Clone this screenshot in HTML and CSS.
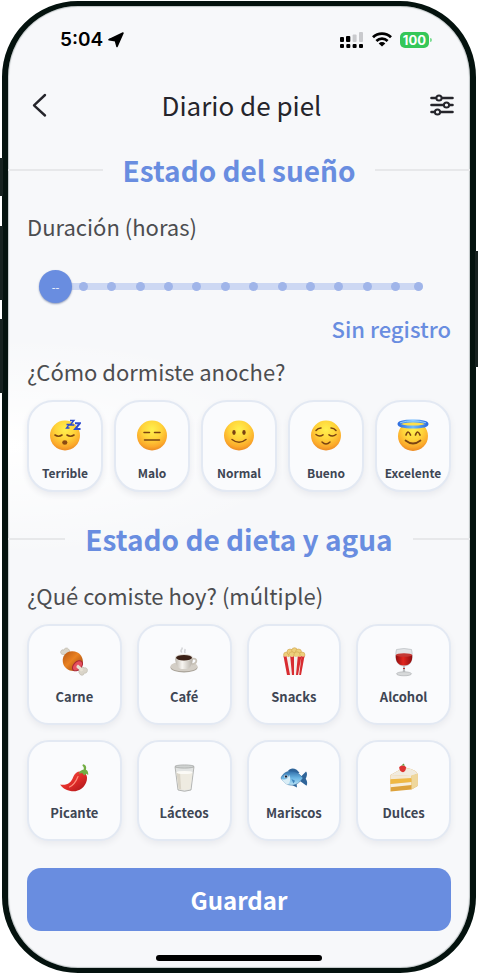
FILE: index.html
```html
<!DOCTYPE html>
<html lang="es">
<head>
<meta charset="utf-8">
<meta name="viewport" content="width=device-width, initial-scale=1">
<title>Diario de piel</title>
<link rel="stylesheet" href="styles.css">
</head>
<body>
<svg class="defs" width="0" height="0" aria-hidden="true">
  <defs>
    <radialGradient id="face" cx="50%" cy="30%" r="72%">
      <stop offset="0" stop-color="#fff04e"/>
      <stop offset="0.45" stop-color="#ffd43a"/>
      <stop offset="0.8" stop-color="#fba92b"/>
      <stop offset="1" stop-color="#ea8521"/>
    </radialGradient>
    <linearGradient id="halo" x1="0" y1="0" x2="1" y2="0">
      <stop offset="0" stop-color="#2f6fe0"/>
      <stop offset="0.5" stop-color="#6ebcff"/>
      <stop offset="1" stop-color="#2f6fe0"/>
    </linearGradient>
    <linearGradient id="meat" x1="0" y1="0" x2="1" y2="1">
      <stop offset="0" stop-color="#b65412"/>
      <stop offset="0.45" stop-color="#ea8221"/>
      <stop offset="1" stop-color="#8c3a0e"/>
    </linearGradient>
    <linearGradient id="cup" x1="0" y1="0" x2="1" y2="0">
      <stop offset="0" stop-color="#bcb6ad"/>
      <stop offset="0.4" stop-color="#f7f5f1"/>
      <stop offset="1" stop-color="#b3ada4"/>
    </linearGradient>
    <linearGradient id="wine" x1="0" y1="0" x2="1" y2="0">
      <stop offset="0" stop-color="#8e0d10"/>
      <stop offset="0.45" stop-color="#e2271f"/>
      <stop offset="1" stop-color="#8e0d10"/>
    </linearGradient>
    <linearGradient id="chili" x1="0" y1="0" x2="1" y2="1">
      <stop offset="0" stop-color="#f8564a"/>
      <stop offset="0.55" stop-color="#de2a27"/>
      <stop offset="1" stop-color="#a4141a"/>
    </linearGradient>
    <linearGradient id="fish" x1="0" y1="0" x2="0" y2="1">
      <stop offset="0" stop-color="#2f6da8"/>
      <stop offset="0.5" stop-color="#6cb6e4"/>
      <stop offset="1" stop-color="#b9e2f5"/>
    </linearGradient>
  </defs>
</svg>

<div class="phone">
  <span class="key key-action"></span>
  <span class="key key-up"></span>
  <span class="key key-down"></span>
  <span class="key key-power"></span>

  <main class="screen">
    <div class="status">
      <div class="status-time">
        <span>5:04</span>
        <svg width="16" height="16" viewBox="0 0 16 16"><path d="M15 1 9 14.500 7.400 8.600 1 7.600Z" fill="#000" stroke="#000" stroke-width="1.600" stroke-linejoin="round"/></svg>
      </div>
      <div class="status-icons">
        <svg width="24" height="16" viewBox="0 0 24 16">
          <g fill="#000"><rect x="0" y="5" width="4" height="5" rx="1"/><rect x="6" y="4" width="4.300" height="6" rx="1"/><rect x="0" y="12" width="4" height="4" rx="1"/><rect x="6.300" y="12" width="4" height="4" rx="1"/><rect x="12.600" y="12" width="4" height="4" rx="1"/><rect x="19" y="12" width="4" height="4" rx="1"/></g>
          <g fill="#c9cacd"><rect x="12.600" y="2.500" width="4" height="7.500" rx="1"/><rect x="19" y="0" width="4" height="10" rx="1"/></g>
        </svg>
        <svg width="20" height="15" viewBox="0 0 20 15"><g fill="none" stroke="#000" stroke-width="2.800"><path d="M1 5.200a13 13 0 0 1 18 0"/><path d="M4.400 8.900a8.200 8.200 0 0 1 11.200 0"/></g><path d="M10 14.600 6.700 11.400a4.700 4.700 0 0 1 6.600 0Z"/></svg>
        <span class="battery">100</span>
      </div>
    </div>

    <header class="topbar">
      <button class="icon-btn" type="button" aria-label="Volver">
        <svg width="26" height="26" viewBox="0 0 26 26"><path d="M18 3 7 13.300 18 23.500" fill="none" stroke="#25252b" stroke-width="2.400" stroke-linecap="round" stroke-linejoin="round"/></svg>
      </button>
      <h1>Diario de piel</h1>
      <button class="icon-btn" type="button" aria-label="Ajustes">
        <svg width="24" height="22" viewBox="0 0 24 22"><g fill="#f7f8fa" stroke="#25252b" stroke-width="2.600" stroke-linecap="round"><path d="M1.500 4h21M1.500 11h21M1.500 18h21"/><circle cx="9" cy="4" r="2.600" stroke-width="2"/><circle cx="16.500" cy="11" r="2.600" stroke-width="2"/><circle cx="7.500" cy="18" r="2.600" stroke-width="2"/></g></svg>
      </button>
    </header>

    <form class="journal">
      <h2>Estado del sueño</h2>
      <label class="question" for="hours">Duración (horas)</label>
      <div class="slider">
        <div class="track"></div>
        <div class="ticks">
          <div class="ticks-main"><i></i><i></i><i></i><i></i><i></i><i></i><i></i><i></i><i></i><i></i><i></i><i></i></div>
          <i></i>
        </div>
        <input id="hours" type="range" min="0" max="13" value="0">
        <output class="thumb-value" for="hours">--</output>
      </div>
      <p class="record">Sin registro</p>

      <p class="question">¿Cómo dormiste anoche?</p>
      <div class="moods">
        <button class="card" type="button">
          <svg width="32" height="32" viewBox="0 0 32 32"><circle cx="16" cy="16.500" r="15" fill="url(#face)"/><g fill="none" stroke="#7a4312" stroke-width="1.600" stroke-linecap="round"><path d="M6 16q3.500 2.600 7 0M18 16q3.500 2.600 7 0"/></g><ellipse cx="15.800" cy="23.500" rx="2.600" ry="2.200" fill="#8b4a12"/><g fill="none" stroke="#2d4bd0" stroke-linejoin="miter"><path d="M17.500 5.500h2.800l-2.800 3.500h3" stroke-width="1.300"/><path d="M21 1.500h3.800l-3.500 4.500h4" stroke-width="1.500"/><path d="M26 4.300h4.800l-4.600 5.700h5.300" stroke-width="2"/></g></svg>
          <span>Terrible</span>
        </button>
        <button class="card" type="button">
          <svg width="32" height="32" viewBox="0 0 32 32"><circle cx="16" cy="16.500" r="15" fill="url(#face)"/><path d="M8 13.500h5.500M18.500 13.500H24M8.500 21h15" fill="none" stroke="#7a4312" stroke-width="1.500" stroke-linecap="round"/></svg>
          <span>Malo</span>
        </button>
        <button class="card" type="button">
          <svg width="32" height="32" viewBox="0 0 32 32"><circle cx="16" cy="16.500" r="15" fill="url(#face)"/><g fill="#7a4312"><ellipse cx="11" cy="13.500" rx="1.700" ry="2.400"/><ellipse cx="21" cy="13.500" rx="1.700" ry="2.400"/></g><path d="M9 20.500q7 5.500 14 0" fill="none" stroke="#7a4312" stroke-width="1.500" stroke-linecap="round"/></svg>
          <span>Normal</span>
        </button>
        <button class="card" type="button">
          <svg width="32" height="32" viewBox="0 0 32 32"><circle cx="16" cy="16.500" r="15" fill="url(#face)"/><path d="M6 15.500q3.500 3 7 .3M19 15.800q3.500 2.700 7-.3M6 11.500q2-2.500 5-2.500M26 11.500q-2-2.500-5-2.500M12 23q4 4 8 0" fill="none" stroke="#7a4312" stroke-width="1.500" stroke-linecap="round"/></svg>
          <span>Bueno</span>
        </button>
        <button class="card" type="button">
          <svg width="32" height="32" viewBox="0 0 32 32"><circle cx="16" cy="17" r="15" fill="url(#face)"/><ellipse cx="16" cy="5" rx="14" ry="3" fill="#ffe04a" stroke="url(#halo)" stroke-width="3"/><path d="M3 3.800q13-4 26 0" fill="none" stroke="#a6dcff" stroke-width=".8"/><path d="M9 16q2-6 4.500 0M18.500 16q2-6 4.500 0M8.500 21.500q7.500 6 15 0" fill="none" stroke="#7a4312" stroke-width="1.700" stroke-linecap="round" stroke-linejoin="round"/></svg>
          <span>Excelente</span>
        </button>
      </div>

      <h2>Estado de dieta y agua</h2>
      <p class="question">¿Qué comiste hoy? (múltiple)</p>
      <div class="foods">
        <button class="card" type="button">
          <svg width="30" height="30" viewBox="0 0 30 30"><g fill="#d9d4c9" stroke="#b0aa9d" stroke-width=".5"><path d="M8.500 9.500 4 7.500a2.300 2.300 0 0 1-2.300-3A2.400 2.400 0 0 1 5 3a2.500 2.500 0 0 1 4.500-1 2.400 2.400 0 0 1 .8 3l1 3Z"/><path d="m18 19 3.800 2.200a2.500 2.500 0 0 1 3.500-.4 2.400 2.400 0 0 1 3 3 2.300 2.300 0 0 1-3 2.300 2.400 2.400 0 0 1-4.600.7 2.500 2.500 0 0 1-.6-3l-4-3Z"/></g><path d="M4.500 9.500C7 4.500 13 3 18.500 5.500c4 2 6 6.500 5.200 11.500L14.500 24C9.500 24 5 20.500 4 16c-.5-2.500-.3-4.500.5-6.500Z" fill="url(#meat)"/><ellipse cx="18.500" cy="18.800" rx="6" ry="3.900" transform="rotate(-45 18.500 18.800)" fill="#e5505f" stroke="#a92835"/><path d="m17.500 19 1.500-1.500 4.500 4 .5 2.300-2 .7-4.500-4Z" fill="#e7e1d4"/></svg>
          <span>Carne</span>
        </button>
        <button class="card" type="button">
          <svg width="30" height="30" viewBox="0 0 30 30"><path d="M12.500 5c-2-2 1.500-2.500.5-4M16 5.500c-1-1.500.5-2 0-3" fill="none" stroke="#d4d5d8" stroke-width="1.500" stroke-linecap="round"/><ellipse cx="15" cy="20.500" rx="13.500" ry="5" fill="#a8a298"/><ellipse cx="15" cy="19.500" rx="13.500" ry="4.800" fill="#d3cec6"/><path d="M23 12c5-2 6.500 4 0 5.500" fill="none" stroke="#c8c2b8" stroke-width="1.800"/><path d="M6 10.500h18c0 6-3 11.500-6.500 11.500h-5C9 22 6 16.500 6 10.500Z" fill="url(#cup)"/><ellipse cx="15" cy="10.500" rx="9" ry="3.500" fill="#e3dfd8"/><ellipse cx="15" cy="10.800" rx="8" ry="2.800" fill="#3b2117"/></svg>
          <span>Café</span>
        </button>
        <button class="card" type="button">
          <svg width="30" height="30" viewBox="0 0 30 30"><g fill="#edcf7b" stroke="#c99b45" stroke-width=".5"><circle cx="7.500" cy="8" r="3"/><circle cx="11" cy="5" r="3"/><circle cx="15.500" cy="3.500" r="2.800"/><circle cx="19.500" cy="5" r="3"/><circle cx="23" cy="8" r="3"/><circle cx="13" cy="8" r="3.200"/><circle cx="18" cy="8" r="3.200"/></g><path d="M4.500 9q1.500 1.500 3 0 1.800 2 3.700 0 1.900 2 3.800 0 1.900 2 3.800 0 1.900 2 3.700 0 1.500 1.500 3 0L22 28H8Z" fill="#f3eeeb"/><path d="M4.500 9q1.500 1.500 3 0L11 28H8ZM11.200 9q1.900 2 3.800 0v19h-2ZM18.800 9q1.900 2 3.700 0L19 28h-2ZM22.500 9q1.500 1.500 3 0L22 28h-1.800Z" fill="#d82c31"/></svg>
          <span>Snacks</span>
        </button>
        <button class="card" type="button">
          <svg width="30" height="30" viewBox="0 0 30 30"><path d="M7.500 2.500q7.500-2 15 0c1.500 6 1.500 16.500-7.500 16.500S6 8.500 7.500 2.500Z" fill="#e2e4e6" stroke="#b9bdc1" stroke-width=".7"/><path d="M6.800 8h16.400c.4 6-1.800 10.500-8.200 10.500S6.400 14 6.800 8Z" fill="url(#wine)"/><ellipse cx="15" cy="8" rx="8.100" ry="1.700" fill="#c43a35"/><path d="M14.200 19h1.600l.5 7h-2.600Z" fill="#babdc0"/><ellipse cx="15" cy="26.800" rx="7.500" ry="2" fill="#d7d9da" stroke="#a6aaad" stroke-width=".6"/><path d="M14 21.500h2" stroke="#b33b3b"/></svg>
          <span>Alcohol</span>
        </button>
        <button class="card" type="button">
          <svg width="30" height="30" viewBox="0 0 30 30"><path d="M1.200 21.500c6.500 1.200 11-1.500 13-7.500 1.600-4.500 5-6.300 9-5.300 4.300 1.200 5.600 5 4.500 9C26 25 18.500 29.500 11.500 28 6.500 27 2.500 24.300 1.200 21.500Z" fill="url(#chili)"/><path d="M24 1.200c3 .3 3.700 3 2.900 5.600 2 1 2.500 2.500 2.300 5.200l-2-1.200-2 1.700-2-2.500-3.500.7c1-2.500 2.800-4 5-4.300.3-1.700.1-2.900-1.300-3.700Z" fill="#72ad43"/><path d="M19 13.500c-2 5-4 8.500-8.500 10.500" fill="none" stroke="#ff8e7c" stroke-width="1.200" stroke-linecap="round"/></svg>
          <span>Picante</span>
        </button>
        <button class="card" type="button">
          <svg width="30" height="30" viewBox="0 0 30 30"><path d="M6 3.500h19L22 27q-6.500 2.500-13 0Z" fill="#e2e4e3" stroke="#a6a7a5" stroke-width=".8"/><path d="M7.500 9.500h16L21.300 26q-5.800 2-11.600 0Z" fill="#eeebe1"/><path d="M7.500 9.500h3.500l1.200 17-2.500-.5Z" fill="#dad5c8"/><ellipse cx="15.500" cy="9.500" rx="8" ry="1.600" fill="#fbfaf6"/><ellipse cx="15.500" cy="3.500" rx="9.500" ry="1.600" fill="#cfd2d1" stroke="#a0a3a2" stroke-width=".7"/></svg>
          <span>Lácteos</span>
        </button>
        <button class="card" type="button">
          <svg width="30" height="30" viewBox="0 0 30 30"><path d="M9 8C11 4.500 17 4 20.500 10l-5 1ZM13 22l5 2.500-.5-4.500ZM21 14.500l6-6c1.800 2 .8 5-.3 7.300 1.600 2.300 2 5 .8 7L21 18Z" fill="#2f6499"/><path d="M2 15c2-5.500 8-8 13.500-6.500 3.500 1 5.700 3.500 8.500 6.500-2.500 3.500-6 7-11 7.200C8 22.300 4 19 2 15Z" fill="url(#fish)" stroke="#2f6499" stroke-width=".5"/><path d="M2.500 16c3.500 1.200 6 .6 7.800-4C12 16 11.500 19 9 21.500 6 20.500 4 19 2.500 16Z" fill="#d9edf6"/><circle cx="7" cy="13.500" r="1.700" fill="#fff"/><circle cx="7" cy="13.500" r="1.200" fill="#14233b"/><path d="m12.500 16 3.500 1.700-1.500 2.800Z" fill="#3e83bd"/></svg>
          <span>Mariscos</span>
        </button>
        <button class="card" type="button">
          <svg width="30" height="30" viewBox="0 0 30 30"><path d="M1.500 12 14 5c8 0 14 3 14.500 6v12l-6 3.500L1.500 28.500Z" fill="#dda23c"/><path d="M1.500 12 14 5c8 0 14 3 14.500 6L22 13Z" fill="#f1ebdf"/><path d="m1.500 12 21 .5v3.500l-21 .8Z" fill="#f3e9d6"/><path d="M1.500 16.300 22.500 15v4l-21 2Z" fill="#efb843"/><path d="m1.500 21 21-2v3l-21 2.300Z" fill="#f7eedc"/><path d="M22.500 12.300q4-.3 6-2V23l-6 3.500Z" fill="#efd79c"/><path d="M10.300 4.300c1-2.300 5.700-2.300 6.700 0 .2 2.700-1.500 4.700-3 5-2-.3-4-2.300-3.700-5Z" fill="#dd3431"/><path d="m12.500 2.500 2-2 1.500 2Z" fill="#62993c"/></svg>
          <span>Dulces</span>
        </button>
      </div>
      <button class="save" type="submit">Guardar</button>
    </form>
    <div class="home-bar"></div>
  </main>
</div>
</body>
</html>
```
FILE: styles.css
```css
* {
  box-sizing: border-box;
}

body {
  margin: 0;
  background: #fff;
  font-family: "Noto Sans CJK SC", "Noto Sans", sans-serif;
  color: #25252b;
}

h1,
h2,
p {
  margin: 0;
}

button {
  font-family: inherit;
  cursor: pointer;
}

svg {
  display: block;
}

.defs {
  position: absolute;
}

.phone {
  position: relative;
  max-width: 520px;
  margin: 1px 2px;
  border: 5px solid #04120e;
  border-left-width: 6px;
  border-right-width: 6px;
  border-radius: 76px;
  background: #f7f8fa;
  box-shadow: inset 0 0 1px 1px #bfc5c6;
}

.key {
  position: absolute;
  width: 3px;
  background: #16211f;
}

.key-action {
  top: 152px;
  left: -8px;
  height: 38px;
}

.key-up {
  top: 220px;
  left: -8px;
  height: 74px;
}

.key-down {
  top: 313px;
  left: -8px;
  height: 74px;
}

.key-power {
  top: 245px;
  right: -8px;
  height: 116px;
}

.screen {
  padding-bottom: 7px;
  border-radius: 70px;
  background: radial-gradient(ellipse 300px 110px at 0 440px, #fff, transparent);
}

.status {
  display: flex;
  justify-content: space-between;
  align-items: center;
  height: 66px;
  padding: 1px 41px 0 52px;
}

.status-time,
.status-icons {
  display: flex;
  align-items: center;
}

.status-time {
  gap: 5px;
  font: 600 19px/24px Inter, sans-serif;
  color: #000;
}

.status-icons {
  gap: 8px;
}

.battery {
  position: relative;
  padding: 0 3px;
  border-radius: 5px;
  background: #35c759;
  font: 700 13px/16px Inter, sans-serif;
  color: #fff;
}

.battery::after {
  content: "";
  position: absolute;
  top: 6px;
  right: -3px;
  width: 2px;
  height: 4px;
  border-radius: 0 2px 2px 0;
  background: #7bdc92;
}

.topbar {
  display: flex;
  justify-content: space-between;
  align-items: center;
  height: 66px;
  padding: 0 16px 0 19px;
}

.icon-btn {
  padding: 0;
  border: 0;
  background: none;
}

h1 {
  font-size: 26px;
  font-weight: 400;
  line-height: 36px;
}

.journal {
  display: flex;
  flex-direction: column;
  padding: 14px 19px 0;
}

h2 {
  display: flex;
  align-items: center;
  gap: 20px;
  margin: 0 -19px;
  font-size: 28px;
  font-weight: 700;
  line-height: 36px;
  white-space: nowrap;
  color: #698de0;
}

h2::before,
h2::after {
  content: "";
  flex: 1;
  height: 2px;
  background: #e7e8ea;
}

.question {
  margin-top: 23px;
  font-size: 22px;
  font-weight: 400;
  line-height: 30px;
  color: #4c4d50;
}

.slider {
  display: grid;
  align-items: center;
  margin: 29px 28px 0 12px;
}

.slider > * {
  grid-area: 1 / 1;
}

.track {
  height: 7px;
  margin-left: 16px;
  border-radius: 4px;
  background: #cdd8f3;
}

.ticks {
  display: flex;
  gap: 14px;
  padding-left: 40px;
}

.ticks-main {
  flex: 1;
  display: flex;
  justify-content: space-between;
}

.ticks i {
  width: 9px;
  height: 9px;
  border-radius: 50%;
  background: #a0b5e9;
}

#hours {
  appearance: none;
  width: 100%;
  height: 33px;
  margin: 0;
  background: none;
}

#hours::-webkit-slider-thumb {
  appearance: none;
  width: 33px;
  height: 33px;
  border-radius: 50%;
  background: #698de0;
  box-shadow: 0 1px 2px #8f9bb8;
}

.thumb-value {
  width: 33px;
  font-size: 11px;
  line-height: 16px;
  text-align: center;
  color: #fff;
  pointer-events: none;
}

.record {
  margin-top: 10px;
  font-size: 22px;
  font-weight: 500;
  line-height: 30px;
  text-align: right;
  color: #698de0;
}

.record + .question {
  margin-top: 13px;
}

.moods,
.foods {
  display: grid;
  margin-top: 14px;
}

.moods {
  grid-template-columns: repeat(5, 1fr);
  gap: 11px;
  margin-bottom: 29px;
}

.foods {
  grid-template-columns: repeat(4, 1fr);
  gap: 15px;
}

.card {
  display: flex;
  flex-direction: column;
  align-items: center;
  min-width: 0;
  padding: 17px 0 7px;
  border: 2px solid #e3e9f3;
  border-radius: 26px;
  background: #fafbfd;
  box-shadow: 0 3px 6px #e9eaee;
  font-size: 12px;
  font-weight: 700;
  line-height: 20px;
  color: #3e4654;
}

.moods .card {
  gap: 12px;
}

.foods .card {
  gap: 10px;
  padding: 21px 0 16px;
  border-radius: 22px;
  font-size: 13px;
}

.save {
  margin-top: 27px;
  padding: 0;
  border: 0;
  border-radius: 14px;
  background: #698de0;
  font-size: 24px;
  font-weight: 700;
  line-height: 63px;
  color: #fff;
}

.home-bar {
  width: 36%;
  height: 6px;
  margin: 24px auto 0;
  border-radius: 3px;
  background: #000;
}
```
